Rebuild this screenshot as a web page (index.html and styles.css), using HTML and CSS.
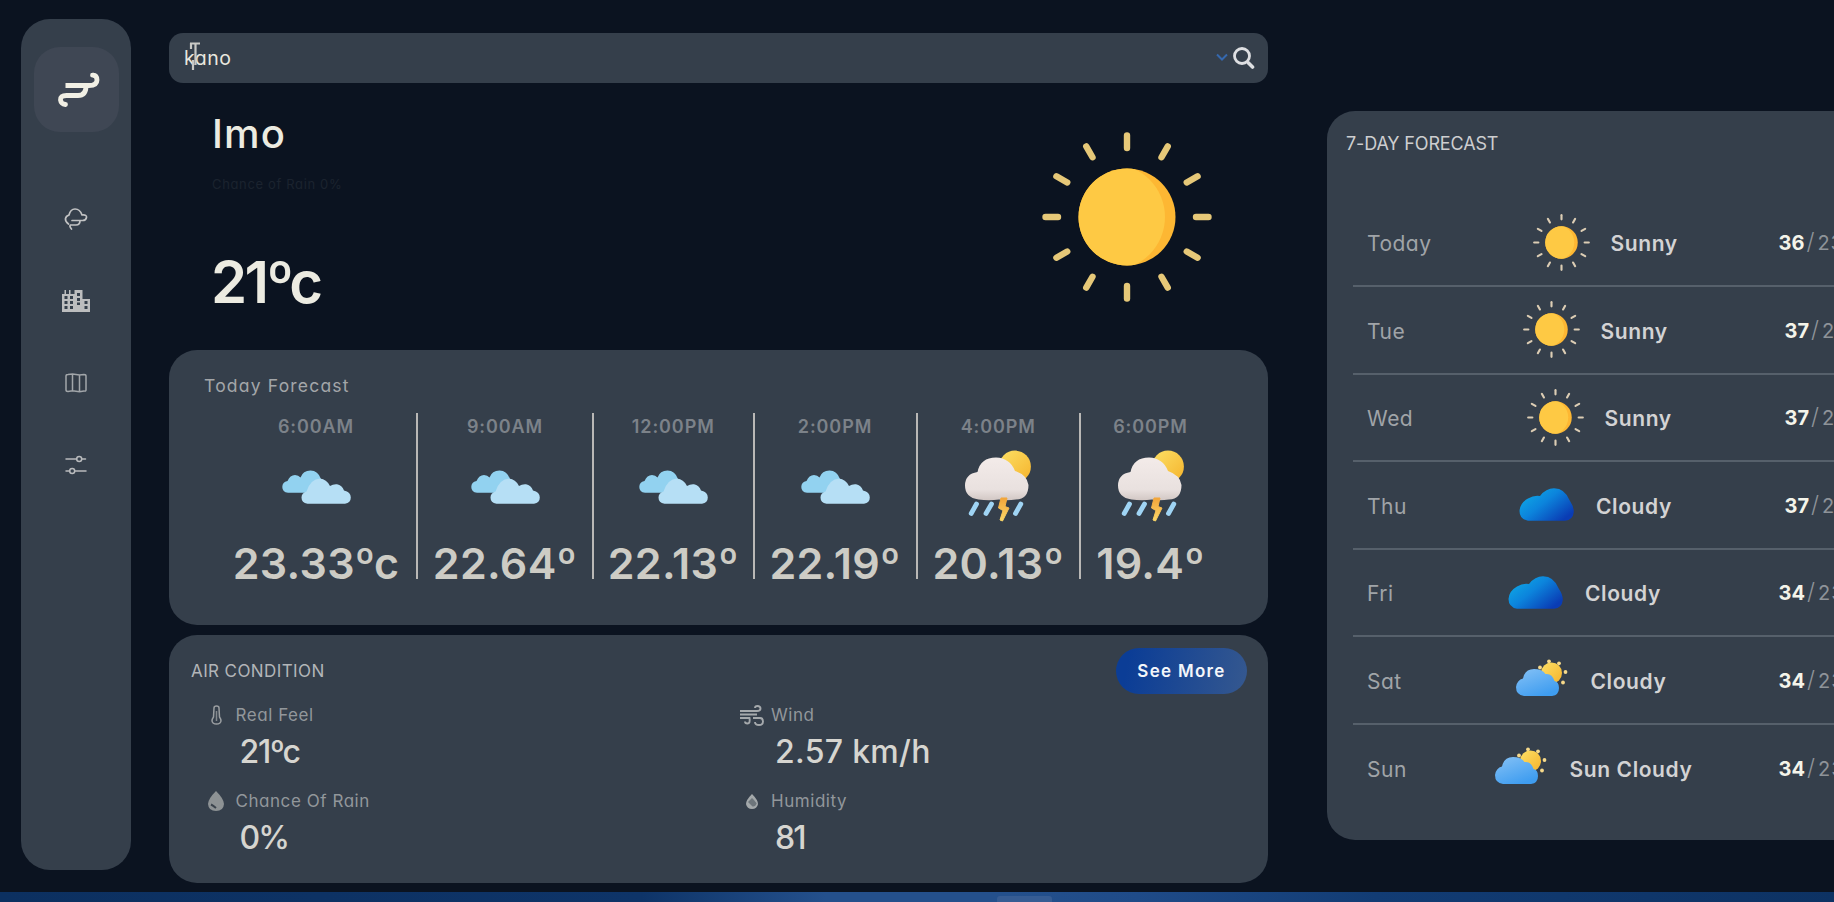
FILE: index.html
```html
<!DOCTYPE html>
<html lang="en">
<head>
<meta charset="utf-8">
<title>Weather</title>
<link rel="stylesheet" href="styles.css">
</head>
<body>
<svg class="defs" width="0" height="0">
  <defs>
    <linearGradient id="deep" x1="0" y1="0" x2="1" y2="0.75"><stop offset="0.1" stop-color="#0eaae6"/><stop offset="0.5" stop-color="#0c84dc"/><stop offset="0.98" stop-color="#0a3cb4"/></linearGradient>
    <linearGradient id="soft" x1="0" y1="0" x2="0.6" y2="1"><stop offset="0" stop-color="#86c2f6"/><stop offset="1" stop-color="#3f9df0"/></linearGradient>
    <linearGradient id="gold" x1="0" y1="0" x2="1" y2="1"><stop offset="0.2" stop-color="#fbd75a"/><stop offset="1" stop-color="#f5b32c"/></linearGradient>
    <linearGradient id="pearl" x1="0" y1="0" x2="0" y2="1"><stop offset="0" stop-color="#f3ebe9"/><stop offset="0.75" stop-color="#e9e1df"/><stop offset="1" stop-color="#d2c7c4"/></linearGradient>
    <linearGradient id="bolt" x1="0" y1="0" x2="0" y2="1"><stop offset="0" stop-color="#f2a53a"/><stop offset="1" stop-color="#fbd768"/></linearGradient>
    <clipPath id="disc"><circle cx="85" cy="85" r="48.500"/></clipPath>
  </defs>
  <symbol id="rays" viewBox="0 0 170 170">
    <g stroke-width="6.4" stroke-linecap="round" stroke="currentColor">
      <path id="ray" d="M85 3.500V16"/>
      <use href="#ray" transform="rotate(30 85 85)"/><use href="#ray" transform="rotate(60 85 85)"/>
      <use href="#ray" transform="rotate(90 85 85)"/><use href="#ray" transform="rotate(120 85 85)"/>
      <use href="#ray" transform="rotate(150 85 85)"/><use href="#ray" transform="rotate(180 85 85)"/>
      <use href="#ray" transform="rotate(210 85 85)"/><use href="#ray" transform="rotate(240 85 85)"/>
      <use href="#ray" transform="rotate(270 85 85)"/><use href="#ray" transform="rotate(300 85 85)"/>
      <use href="#ray" transform="rotate(330 85 85)"/>
    </g>
  </symbol>
  <symbol id="sun" viewBox="0 0 170 170">
    <use href="#rays"/>
    <circle cx="85" cy="85" r="48.500" fill="#fdb733"/>
    <circle cx="70" cy="85" r="53" fill="#fec944" clip-path="url(#disc)"/>
  </symbol>
  <symbol id="clouds" viewBox="0 0 69 34">
    <path d="M6 22.800Q0.300 22 0.300 17Q0.300 12 5.500 11Q8 5 13 5Q16.500 5 18.500 7.500Q21 0.500 28.500 0.500Q36 0.500 39 9L46 14L38 22.800Z" fill="#92d2f0"/>
    <path d="M25.500 33.800Q19.500 33 19.500 27.500Q19.500 23 24.500 21.500Q28.500 9 38 8.500Q44.500 9 48 16Q51 14 55 14.300Q60 15 62 20.500Q68.800 22 68.800 27.500Q68.800 33 63 33.800Z" fill="#b6dff5"/>
  </symbol>
  <symbol id="storm" viewBox="0 0 66 72">
    <circle cx="50" cy="16.500" r="15.900" fill="url(#gold)"/>
    <path d="M13.500 49.500Q0 47.500 0 35.500Q0 24 12.500 22Q15.500 7.500 31 7.500Q45 8 50 21Q62 25 63.500 35Q63.500 49 51 49.500Q41 51 34 49.500Q24 51 13.500 49.500Z" fill="url(#pearl)"/>
    <g stroke="#9fd4f4" stroke-width="4.800" stroke-linecap="round"><path d="M11.500 54L6.200 63.500M26.500 54L21 63.500M55.800 54L50.500 63.500"/></g>
    <path d="M36 48h6l-2 8.500l4 1.500L37.500 71l-2.500-1 3-9.500-4.500-2.500z" fill="url(#bolt)" stroke="url(#bolt)" stroke-linejoin="round"/>
  </symbol>
  <symbol id="cloud" viewBox="0 0 55 33">
    <path d="M9 32.800Q0.500 31 0.500 23Q1 15 9 10.500Q15 7 21 8Q27 0.300 35 0.300Q46 0.300 51 13Q55 19 54.800 24Q54 32 46 32.800Z" fill="url(#deep)"/>
  </symbol>
  <symbol id="partly" viewBox="0 0 52 37">
    <g fill="#f6d98a"><circle cx="24" cy="8.500" r="1.900"/><circle cx="33" cy="2.300" r="1.900"/><circle cx="43" cy="4.300" r="1.900"/><circle cx="49.500" cy="13" r="1.900"/><circle cx="47" cy="23.500" r="1.900"/></g>
    <circle cx="35.500" cy="14" r="10.500" fill="url(#gold)"/>
    <path d="M8 37Q0 36 0 28Q1 21 7 19.500Q9 10 18 10Q26 10 29.500 15Q36 14 38.500 22Q43 23 43 29Q43 36 36 37Z" fill="url(#soft)"/>
  </symbol>
</svg>
<div class="app">
  <nav class="sidebar">
    <div class="logo">
      <svg width="42" height="36" viewBox="0 0 42 36" fill="none" stroke="#f1efe4" stroke-width="4.800" stroke-linejoin="round"><path d="M7.500 13.500H31Q39 13.500 39 8Q39 3.500 35 3.200"/><path d="M35 3.200H34.500M28 14Q28 23.500 20 23.500H8.500Q2.500 23.500 2.500 28Q3 32 7.500 32.500" stroke-linecap="round"/></svg>
    </div>
    <svg class="nav1" width="24" height="24" viewBox="0 0 24 24" fill="none" stroke="#c2c3c4" stroke-width="1.700" stroke-linecap="round" stroke-linejoin="round"><path d="M4.500 17Q1 14.500 1.500 11.500Q2 9 5 8Q6.500 2 11 2Q16 2 18 8Q23 7.500 22.500 10.500Q22 13.500 18.500 13.500H8M16 13.800Q16 18 12 18H6.500Q5 19 7.500 22"/></svg>
    <svg class="nav2" width="28" height="24" viewBox="0 0 28 24"><path fill="#bcbdbe" fill-rule="evenodd" d="M0 6H2.500V2H4V6H7V2H8.500V6H12.500V2H20.500V11H28V24H0zM2.500 8v3h3V8zM8 8v3h3V8zM2.500 13v3h3v-3zM8 13v3h3v-3zM2.500 18v3h3v-3zM8 18v3h3v-3zM15 5v3h3V5zM15 10v3h3v-3zM15 14.500v2.500h3v-2.500zM22.500 13v3h3v-3zM22.500 18v3h3v-3z"/></svg>
    <svg class="nav3" width="22" height="20" viewBox="0 0 22 20" fill="#333c47" stroke="#a2a6aa" stroke-width="1.500"><path d="M1 3Q1 1.500 3 1.500L7.500 1 14.500 2 19 1.500Q21 1.500 21 3V17Q21 18.500 19 18L14.500 18.800 7.500 17.800 3 18.500Q1 18.500 1 17zM7.500 1V18M14.500 2V18.500"/></svg>
    <svg class="nav4" width="22" height="20" viewBox="0 0 22 20" fill="none" stroke="#b9bbbd" stroke-width="1.500" stroke-linecap="round"><path d="M1 4H11.500M17 4H20.500M1 16H4.500M10 16H21"/><circle cx="14.200" cy="4" r="2.500"/><circle cx="7.200" cy="16" r="2.500"/></svg>
  </nav>

  <main class="main">
    <div class="search">
      <span class="query">kano</span>
      <svg class="ibeam" width="12" height="29" viewBox="0 0 12 29" fill="none" stroke="#c9c9c6" stroke-width="2.200"><path d="M1 1.500H11M6.500 1.500V23M2 1V7M4 28V18"/></svg>
      <svg class="chev" width="12" height="9" viewBox="0 0 12 9" fill="none" stroke="#3568ae" stroke-width="2"><path d="M1 1.500L6 6.500L11 1.500"/></svg>
      <svg width="22" height="22" viewBox="0 0 22 22" fill="none" stroke="#dedfe2" stroke-linecap="round"><circle cx="9" cy="9" r="7.500" stroke-width="2.800"/><path d="M15.500 16L19.500 20" stroke-width="3.600"/></svg>
    </div>
    <section class="hero">
      <div>
        <h1 class="city">Imo</h1>
        <p class="chance">Chance of Rain 0%</p>
        <p class="now">21ºc</p>
      </div>
      <svg class="bigsun"><use href="#sun"/></svg>
    </section>

    <section class="card today">
      <h2 class="today-title">Today Forecast</h2>
      <div class="hours">
        <div class="hour h1"><span class="time">6:00AM</span><svg class="ic-c"><use href="#clouds"/></svg><span class="deg">23.33ºc</span></div>
        <div class="hour h2"><span class="time">9:00AM</span><svg class="ic-c"><use href="#clouds"/></svg><span class="deg">22.64º</span></div>
        <div class="hour h3"><span class="time">12:00PM</span><svg class="ic-c"><use href="#clouds"/></svg><span class="deg">22.13º</span></div>
        <div class="hour h4"><span class="time">2:00PM</span><svg class="ic-c"><use href="#clouds"/></svg><span class="deg">22.19º</span></div>
        <div class="hour h5"><span class="time">4:00PM</span><svg class="ic-s"><use href="#storm"/></svg><span class="deg">20.13º</span></div>
        <div class="hour h6"><span class="time">6:00PM</span><svg class="ic-s"><use href="#storm"/></svg><span class="deg">19.4º</span></div>
      </div>
    </section>

    <section class="card air">
      <header class="air-head"><h2 class="air-title">AIR CONDITION</h2><button class="more">See More</button></header>
      <div class="metrics">
        <div class="metric">
          <div class="label"><span class="mi"><svg width="11" height="20" viewBox="0 0 11 20" fill="none" stroke="#9a9ea1" stroke-width="1.500"><path d="M3 3Q3 1 5.500 1T8 3L8.500 12Q10 14 10 16Q9.500 19 5.500 19T1 16Q1 14 2.500 12z"/><path d="M5.500 6V16" stroke="#858a8e"/></svg></span><span>Real Feel</span></div>
          <div class="val v1">21ºc</div>
        </div>
        <div class="metric">
          <div class="label"><span class="mi"><svg width="24" height="21" viewBox="0 0 24 21" fill="none" stroke="#a5a9ac" stroke-width="1.900"><path d="M0 6H17Q20.500 6 20.500 3.500Q20.500 1 17.500 1Q15 1 15 3M0 9.500H17M0 13H9.500Q10.500 18.500 7.500 18.500Q5 18.500 5 16.500M13 13H20Q23 13 23 16.500Q23 20 19 20Q15 20 15 17"/></svg></span><span>Wind</span></div>
          <div class="val v2">2.57 km/h</div>
        </div>
        <div class="metric">
          <div class="label"><span class="mi"><svg width="16" height="20" viewBox="0 0 16 20"><path d="M8 0Q16 8 16 13Q15.500 20 8 20T0 13Q0 8 8 0z" fill="#8d9294"/><path d="M3 13.500Q5 14.500 8 17" fill="none" stroke="#3a434c" stroke-width="2"/></svg></span><span class="l3">Chance Of Rain</span></div>
          <div class="val v3">0%</div>
        </div>
        <div class="metric">
          <div class="label"><span class="mi"><svg width="12" height="15" viewBox="0 0 12 15"><path d="M6 0Q12 6 12 10Q11 15 6 15T0 10Q0 6 6 0z" fill="#a3a8aa"/><path d="M6 4Q10 8 10.500 9.500Q9.500 13 6.500 12.500L2 8z" fill="#6d757b"/></svg></span><span>Humidity</span></div>
          <div class="val v4">81</div>
        </div>
      </div>
    </section>
  </main>

  <aside class="week">
    <h2 class="week-title">7-DAY FORECAST</h2>
    <ul class="days">
      <li class="day d1"><span class="name">Today</span><svg class="ws"><use href="#sun"/></svg><b class="cond">Sunny</b><span class="hl"><b>36</b><i>/</i>23</span></li>
      <li class="day d2"><span class="name">Tue</span><svg class="ws"><use href="#sun"/></svg><b class="cond">Sunny</b><span class="hl"><b>37</b><i>/</i>21</span></li>
      <li class="day d3"><span class="name">Wed</span><svg class="ws"><use href="#sun"/></svg><b class="cond">Sunny</b><span class="hl"><b>37</b><i>/</i>21</span></li>
      <li class="day d4"><span class="name">Thu</span><svg class="wc"><use href="#cloud"/></svg><b class="cond">Cloudy</b><span class="hl"><b>37</b><i>/</i>21</span></li>
      <li class="day d5"><span class="name">Fri</span><svg class="wc"><use href="#cloud"/></svg><b class="cond">Cloudy</b><span class="hl"><b>34</b><i>/</i>23</span></li>
      <li class="day d6"><span class="name">Sat</span><svg class="wp"><use href="#partly"/></svg><b class="cond">Cloudy</b><span class="hl"><b>34</b><i>/</i>23</span></li>
      <li class="day d7"><span class="name">Sun</span><svg class="wp"><use href="#partly"/></svg><b class="cond">Sun Cloudy</b><span class="hl"><b>34</b><i>/</i>23</span></li>
    </ul>
  </aside>
</div>
<footer class="taskbar"><span class="tab"></span></footer>
</body>
</html>
```
FILE: styles.css
```css
* { box-sizing: border-box; margin: 0; padding: 0; }
html, body { height: 902px; overflow: hidden; }
body { width: 1834px; background: #0b1320; font-family: Inter, "Open Sans", sans-serif; font-feature-settings: "cv11"; color: #e9e7df; display: flex; flex-direction: column; }
.defs { position: absolute; }
svg { display: block; flex: none; }
h1, h2 { font-weight: 400; white-space: nowrap; }
.app { display: flex; align-items: flex-start; height: 892px; overflow: hidden; }

.sidebar { flex: none; width: 110px; height: 851px; margin: 19px 0 0 21px; padding-top: 28px; border-radius: 29px; background: #353f4b; display: flex; flex-direction: column; align-items: center; }
.logo { width: 85px; height: 85px; border-radius: 26px; background: #3f4754; display: flex; align-items: center; justify-content: center; padding-left: 6px; }
.nav1 { margin-top: 75px; }
.nav2 { margin-top: 57px; }
.nav3 { margin-top: 61px; }
.nav4 { margin-top: 62px; }

.main { flex: none; width: 1099px; margin: 33px 0 0 38px; }
.search { position: relative; height: 49.500px; border-radius: 14px; background: #353f4b; display: flex; align-items: center; padding: 0 13px 0 15px; }
.query { flex: 1; font-size: 19.500px; letter-spacing: 0.5px; }
.ibeam { position: absolute; left: 20px; top: 9px; }
.chev { margin-right: 5px; }
.hero { height: 267px; padding: 0 56px 0 43px; display: flex; justify-content: space-between; }
.city { margin-top: 27px; font-size: 40px; line-height: 48px; font-weight: 500; color: #ecebe1; letter-spacing: 1.100px; }
.chance { margin-top: 15px; font-size: 13px; line-height: 22px; color: #1b232f; letter-spacing: 0.650px; }
.now { margin-top: 52px; margin-left: -1px; font-size: 58px; line-height: 70px; font-weight: 600; color: #ecebe1; letter-spacing: -2.600px; }
.bigsun { width: 170px; height: 170px; margin-top: 49.500px; color: #e6c878; }

.card { background: #353f4b; border-radius: 28px; }
.today { height: 275.500px; padding: 25px 0 0 35px; }
.today-title { font-size: 17.500px; line-height: 22px; letter-spacing: 1.200px; color: #a3a6a9; }
.hours { display: flex; height: 166px; margin-top: 16.500px; padding-left: 12px; }
.hour { display: flex; flex-direction: column; align-items: center; border-right: 2px solid #b9b8b6; }
.h1 { width: 202px; } .h2 { width: 176px; } .h3 { width: 160.500px; } .h4 { width: 163px; } .h5 { width: 163.500px; } .h6 { width: 139px; border: 0; }
.time { margin-top: 3px; font-size: 18px; line-height: 22px; font-weight: 600; letter-spacing: 0.900px; color: #7c8289; }
.ic-c { width: 69px; height: 34px; margin: 32px 0 30.500px; }
.ic-s { width: 66px; height: 72px; margin: 12px 0 12.500px; }
.deg { font-size: 43px; line-height: 56px; font-weight: 600; letter-spacing: 0.300px; color: #cdccc5; white-space: nowrap; }

.air { height: 248.500px; margin-top: 9.500px; padding: 13px 21px 0 22px; }
.air-head { display: flex; justify-content: space-between; height: 46px; align-items: center; }
.air-title { font-size: 17px; letter-spacing: 0.400px; color: #b2b5b8; }
.more { width: 131px; height: 46px; border: 0; border-radius: 23px; background: linear-gradient(100deg, #0b3d96 10%, #35588f 100%); color: #f3f6fa; font: 600 17px Inter, sans-serif; letter-spacing: 1.300px; }
.metrics { display: grid; grid-template-columns: 535.500px 1fr; grid-auto-rows: 86px; padding: 9.500px 0 0 13px; }
.label { display: flex; align-items: center; height: 24px; font-size: 17px; letter-spacing: 0.550px; color: #92979b; }
.mi + span { margin-left: -0.5px; }
.mi { width: 24px; margin-right: 8px; display: flex; justify-content: center; }
.val { margin: 5.500px 0 0 35.500px; font-size: 32px; line-height: 38px; font-weight: 500; color: #d6d5d0; }
.v1 { letter-spacing: -1.200px; }
.v2 { letter-spacing: 0.300px; }
.v3, .v4 { letter-spacing: -2px; }

.week { flex: none; width: 620px; height: 729px; margin: 110.500px 0 0 59px; padding: 21px 0 0 19px; border-radius: 28px; background: #353f4b; }
.week-title { font-size: 18px; line-height: 24px; color: #cdced0; letter-spacing: -0.150px; }
.days { list-style: none; margin: 44px 0 0 7px; }
.day { display: flex; align-items: center; height: 87.500px; padding-left: 14px; border-bottom: 2px solid #56606b; font-size: 21px; }
.d7 { border: 0; }
.name { flex: none; padding-top: 3px; color: #a0a4a8; letter-spacing: 0.500px; }
.cond { flex: none; padding-top: 3px; font-size: 21px; font-weight: 600; color: #d3d3d4; white-space: nowrap; letter-spacing: 0.600px; }
.hl { flex: none; padding-top: 1.500px; color: #8e9399; font-size: 20px; letter-spacing: 1px; white-space: nowrap; }
.hl b { color: #f4f4ea; font-weight: 700; letter-spacing: 0; }
.hl i { font-style: normal; font-size: 23px; font-weight: 300; line-height: 20px; margin: 0 2px 0 2px; }
.ws { width: 57px; height: 57px; color: #dccdb4; margin-right: 21px; }
.wc { width: 55px; height: 33px; margin-right: 22px; }
.wp { width: 52px; height: 37px; margin: 0 22.500px 5px 0; }
.d1 .name { width: 165.500px; } .d1 .cond { width: 168px; }
.d2 .name { width: 155.500px; } .d2 .cond { width: 184px; }
.d3 .name { width: 159.500px; } .d3 .cond { width: 180px; }
.d4 .name { width: 152px; } .d4 .cond { width: 188.500px; }
.d5 .name { width: 141px; } .d5 .cond { width: 193.500px; }
.d6 .name { width: 149px; } .d6 .cond { width: 188px; }
.d7 .name { width: 128px; } .d7 .cond { width: 209px; }

.taskbar { height: 10px; background: linear-gradient(90deg, #0c3060 0, #0e3468 35%, #24508c 45%, #24508c 55%, #1f4b88 62%, #123c74 75%, #0d3263 100%); padding: 4px 0 0 997px; }
.tab { display: block; width: 55px; height: 6px; border-radius: 3px 3px 0 0; background: #365c93; }
```
